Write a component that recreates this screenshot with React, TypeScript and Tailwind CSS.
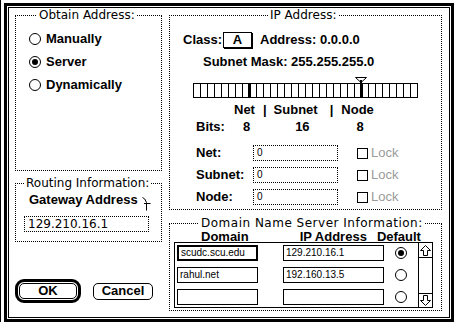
import React from "react";

const radioRows = [
  { label: "Manually", on: false },
  { label: "Server", on: true },
  { label: "Dynamically", on: false },
];

const maskRows = ["Net:", "Subnet:", "Node:"];

const dnsRows = [
  { domain: "scudc.scu.edu", ip: "129.210.16.1", on: true, focus: true },
  { domain: "rahul.net", ip: "192.160.13.5", on: false, focus: false },
  { domain: "", ip: "", on: false, focus: false },
];

function Radio({ on }: { on: boolean }) {
  return (
    <span className="flex size-[12px] shrink-0 items-center justify-center rounded-full border border-black bg-white">
      {on && <span className="size-[6px] rounded-full bg-black" />}
    </span>
  );
}

function Group({
  title,
  legendClass,
  className,
  children,
}: {
  title: string;
  legendClass: string;
  className: string;
  children: React.ReactNode;
}) {
  return (
    <fieldset className={`border border-dotted border-black ${className}`}>
      <legend
        className={`px-[2px] font-['DejaVu_Sans',sans-serif] text-[12px] font-normal leading-[15px] ${legendClass}`}
      >
        {title}
      </legend>
      {children}
    </fieldset>
  );
}

function SubnetBar() {
  const ticks = Array.from({ length: 31 }, (_, i) => (i + 1) * 7);
  return (
    <svg width="225" height="15" viewBox="0 0 225 15" className="block">
      <rect x="0.5" y="0.5" width="224" height="14" fill="white" stroke="black" />
      {ticks.map((x) => (
        <line key={x} x1={x + 0.5} y1="0" x2={x + 0.5} y2="15" stroke="black" />
      ))}
      <rect x="55" y="0" width="3" height="15" fill="black" />
      <rect x="167" y="0" width="3" height="15" fill="black" />
    </svg>
  );
}

function Arrow({ down }: { down?: boolean }) {
  return (
    <svg width="11" height="11" viewBox="0 0 11 11" className={down ? "rotate-180" : ""}>
      <path
        d="M5.5 0.5 L10.5 5.5 H7.5 V10.5 H3.5 V5.5 H0.5 Z"
        fill="white"
        stroke="black"
        strokeWidth="1"
      />
    </svg>
  );
}

export default function App() {
  return (
    <div className="relative h-[322px] w-[457px] overflow-hidden border-l border-black bg-white font-['Liberation_Sans',Arial,sans-serif] text-[13px] font-bold leading-[14px] text-black">
      <div className="ml-[3px] mt-[3px] h-[319px] w-[450px] border-[3px] border-black p-[1px]">
        <div className="flex h-full w-full border border-black pl-[6px]">
          {/* left column */}
          <div className="flex w-[147px] flex-col">
            <Group title="Obtain Address:" legendClass="ml-[21px]" className="h-[163px]">
              <div className="mt-[4px] flex flex-col pl-[13px]">
                {radioRows.map((r) => (
                  <div key={r.label} className="flex h-[23px] items-center gap-[5px]">
                    <Radio on={r.on} />
                    <span>{r.label}</span>
                  </div>
                ))}
              </div>
            </Group>

            <Group title="Routing Information:" legendClass="ml-[8px]" className="mt-[5px] h-[66px]">
              <div className="relative mt-[2px] pl-[13px]">
                Gateway Address
                <svg width="9" height="14" viewBox="0 0 9 14" className="absolute left-[126px] top-[4px]">
                  <path d="M0.5 0.5 Q3 1 4.5 5.5 M2 6.5 H8.5 M4.5 5.5 V13.5" fill="none" stroke="black" />
                </svg>
              </div>
              <div className="ml-[8px] mt-[9px] flex h-[16px] w-[125px] items-center border border-dotted border-black pl-[3px] font-['DejaVu_Sans',sans-serif] text-[12px] font-normal">
                129.210.16.1
              </div>
            </Group>

            <div className="mt-[37px] flex items-center">
              <div className="rounded-[9px] border-[3px] border-black p-[1px]">
                <button className="flex h-[16px] w-[58px] items-center justify-center rounded-[5px] border border-black">
                  OK
                </button>
              </div>
              <button className="ml-[12px] flex h-[17px] w-[60px] items-center justify-center rounded-[5px] border border-black">
                Cancel
              </button>
            </div>
          </div>

          {/* right column */}
          <div className="ml-[7px] flex w-[273px] flex-col">
            <Group title="IP Address:" legendClass="ml-[98px]" className="h-[202px]">
              <div className="mt-[8px] flex h-[17px] items-center pl-[13px]">
                <span>Class:</span>
                <span className="ml-[1px] flex h-[16px] w-[29px] items-center justify-center border border-black shadow-[1px_1px_0_#000]">
                  A
                </span>
                <span className="ml-[8px]">Address: 0.0.0.0</span>
              </div>
              <div className="mt-[7px] pl-[33px]">Subnet Mask: 255.255.255.0</div>
              <div className="mt-[8px] flex flex-col pl-[23px]">
                <svg width="12" height="6" viewBox="0 0 12 6" className="ml-[162px] block">
                  <path d="M0.5 0.5 H11.5 L6 5.5 Z" fill="white" stroke="black" />
                  <line x1="6" y1="3" x2="6" y2="6" stroke="black" strokeWidth="2" />
                </svg>
                <SubnetBar />
              </div>
              <div className="mt-[5px] flex pl-[64px]">
                <span>Net</span>
                <span className="ml-[8px]">|</span>
                <span className="ml-[7px]">Subnet</span>
                <span className="ml-[12px]">|</span>
                <span className="ml-[8px]">Node</span>
              </div>
              <div className="mt-[3px] flex pl-[26px]">
                <span>Bits:</span>
                <span className="ml-[18px]">8</span>
                <span className="ml-[45px]">16</span>
                <span className="ml-[47px]">8</span>
              </div>
              <div className="mt-[11px] flex flex-col gap-[6px] pl-[26px]">
                {maskRows.map((m) => (
                  <div key={m} className="flex h-[16px] items-center">
                    <span className="w-[57px]">{m}</span>
                    <span className="flex h-[16px] w-[85px] items-center border border-dotted border-black pl-[3px] text-[10px] font-normal">
                      0
                    </span>
                    <span className="ml-[19px] size-[11px] border border-black" />
                    <span className="ml-[3px] font-normal text-[#9a9a9a]">Lock</span>
                  </div>
                ))}
              </div>
            </Group>

            <Group
              title="Domain Name Server Information:"
              legendClass="ml-[29px] tracking-[0.5px]"
              className="mt-[6px] h-[95px]"
            >
              <div className="flex h-[11px] items-center">
                <span className="ml-[31px]">Domain</span>
                <span className="ml-[51px]">IP Address</span>
                <span className="ml-[10px]">Default</span>
              </div>
              <div className="ml-[4px] flex h-[66px] w-[259px] border border-black">
                <div className="flex flex-1 flex-col gap-[6px] pt-[2px]">
                  {dnsRows.map((r, i) => (
                    <div key={i} className="flex h-[16px] items-center">
                      <span
                        className={`ml-[2px] flex h-[16px] w-[81px] items-center border-black pl-[2px] text-[10px] font-normal ${
                          r.focus ? "border-2" : "border"
                        }`}
                      >
                        {r.domain}
                      </span>
                      <span className="ml-[25px] flex h-[16px] w-[101px] items-center border border-black pl-[2px] text-[10px] font-normal">
                        {r.ip}
                      </span>
                      <span className="ml-[11px]">
                        <Radio on={r.on} />
                      </span>
                    </div>
                  ))}
                </div>
                <div className="flex w-[14px] flex-col border-l border-black">
                  <div className="flex h-[15px] items-center justify-center border-b border-black">
                    <Arrow />
                  </div>
                  <div className="flex-1" />
                  <div className="flex h-[14px] items-center justify-center border-t border-black">
                    <Arrow down />
                  </div>
                </div>
              </div>
            </Group>
          </div>
        </div>
      </div>
    </div>
  );
}
